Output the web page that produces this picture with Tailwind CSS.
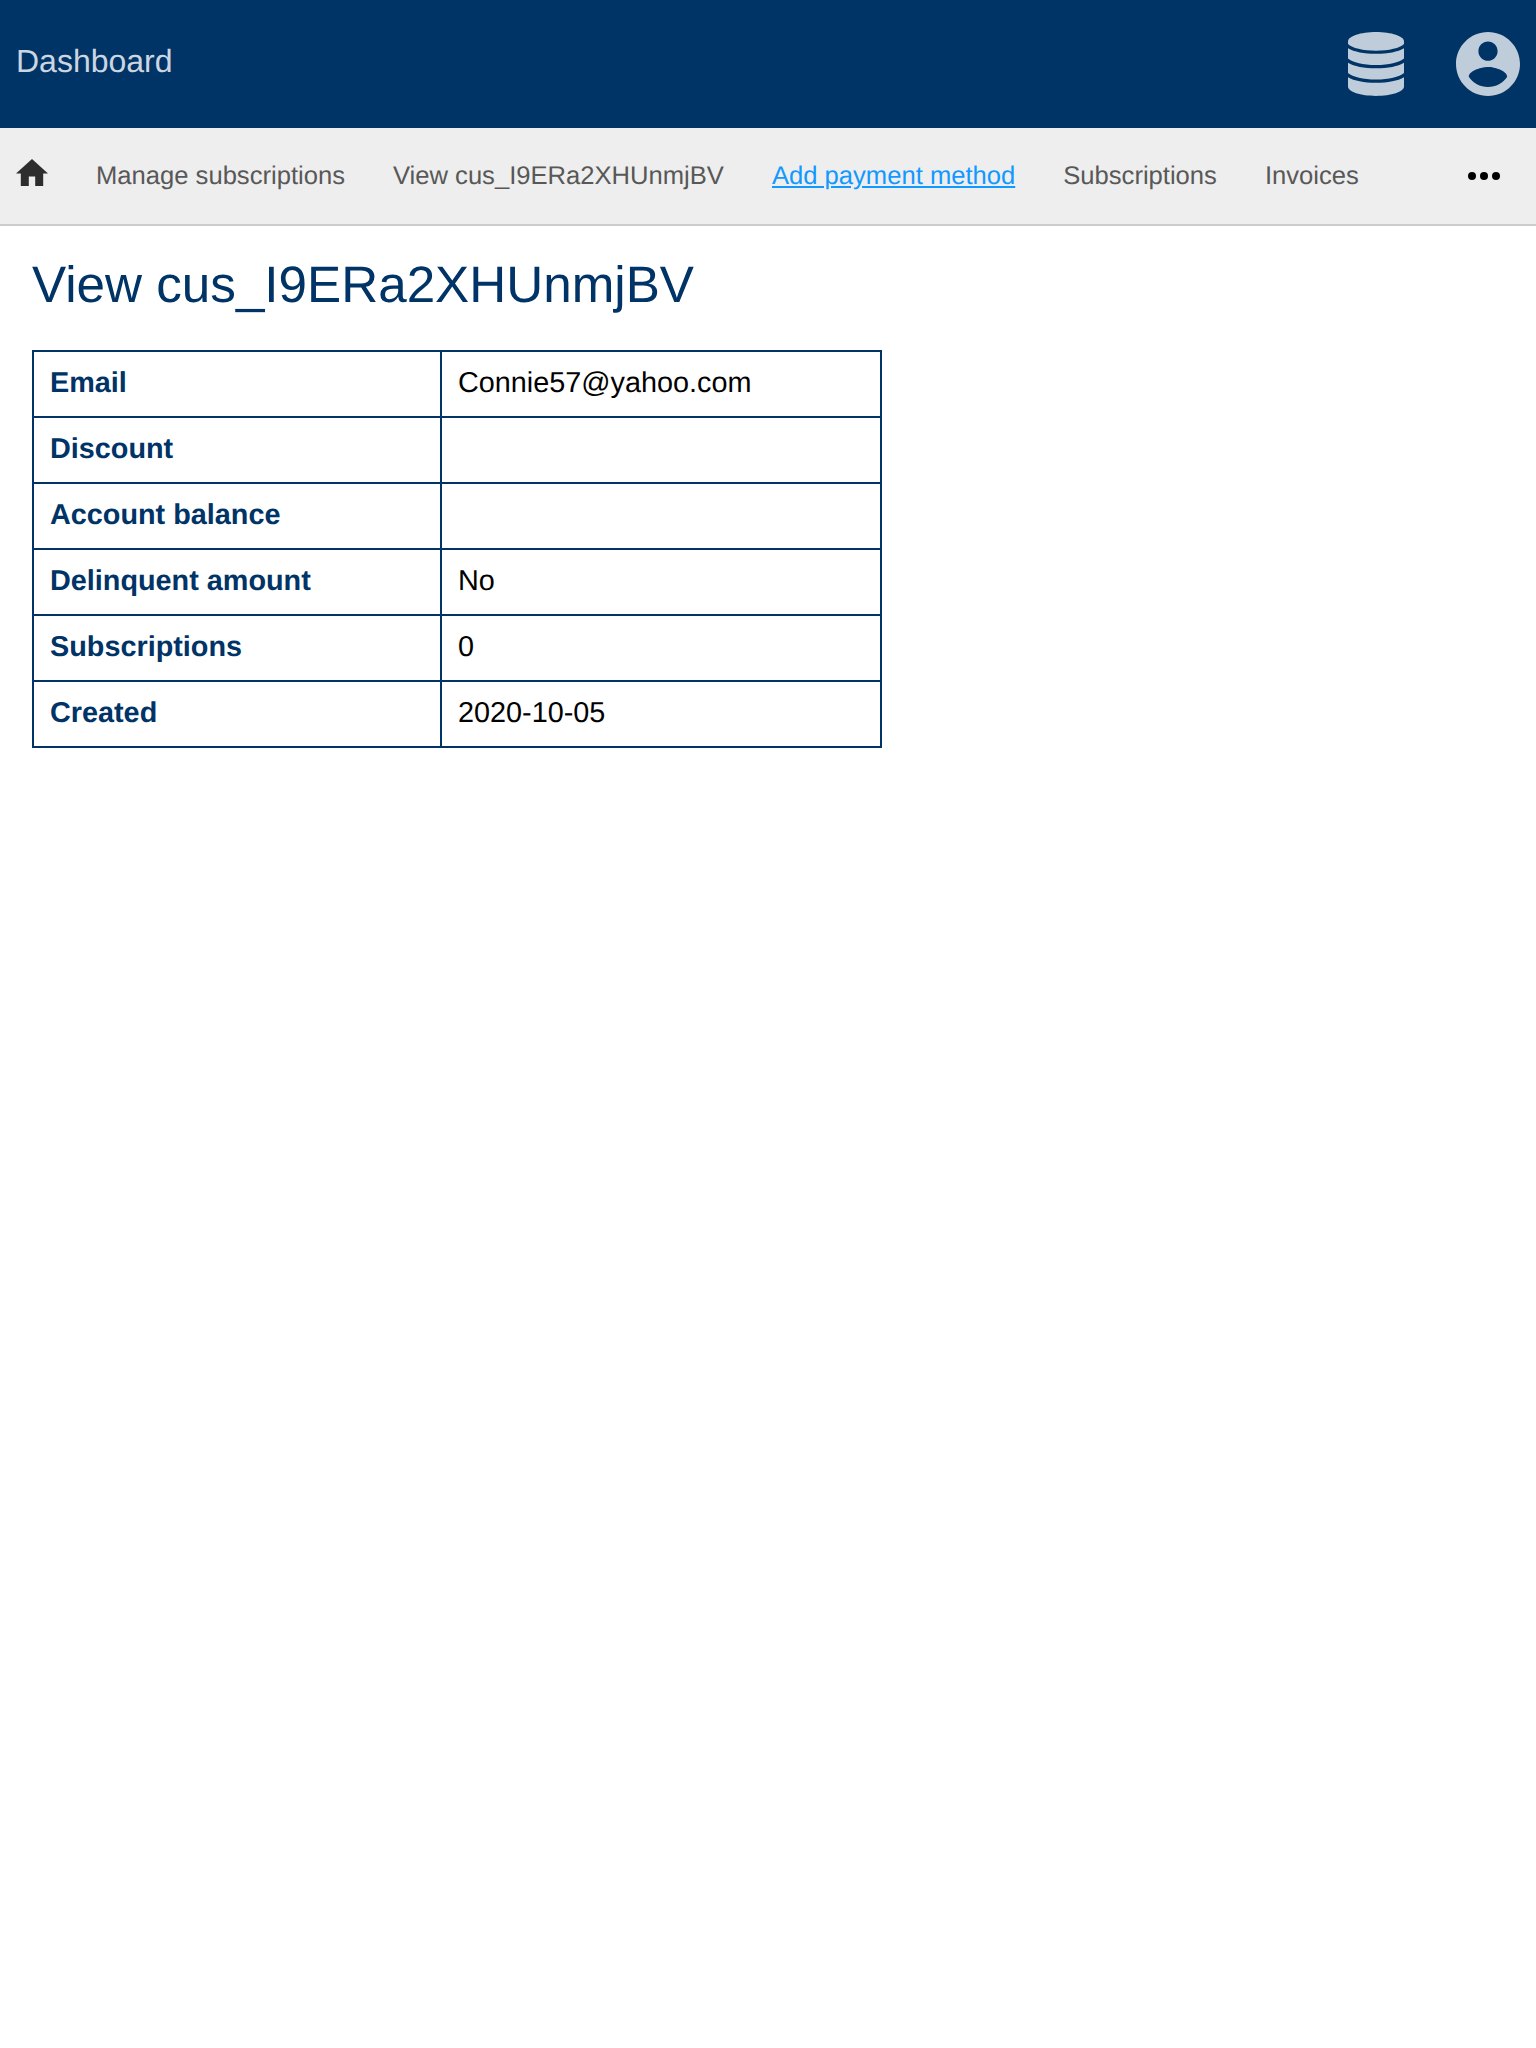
<!DOCTYPE html>
<html lang="en">
<head>
<meta charset="utf-8">
<title>View cus_I9ERa2XHUnmjBV</title>
<script src="https://cdn.jsdelivr.net/npm/@tailwindcss/browser@4"></script>
</head>
<body class="min-h-screen bg-white text-black font-['Liberation_Sans',Arial,sans-serif] [text-rendering:geometricPrecision]">
<header class="flex h-32 items-center justify-between bg-[#003366] px-4">
  <a class="pb-1.5 text-[32px] leading-10 text-[#ccd6e0]">Dashboard</a>
  <div class="flex items-center gap-[52px] text-[#bfccd9]">
    <svg class="h-16 w-14" viewBox="0 0 56 64" fill="currentColor">
      <path d="M28 0C43.500 0 56 4.200 56 9.400V12C52 16 41 18.700 28 18.700S4 16 0 12V9.400C0 4.200 12.500 0 28 0Z"/>
      <path d="M0 16.200C6 19.800 16 21.800 28 21.800S50 19.800 56 16.200V26.500C51 30.400 41 33 28 33S5 30.400 0 26.500Z"/>
      <path d="M0 30.700C6 34.300 16 36.300 28 36.300S50 34.300 56 30.700V41C51 44.900 41 47.500 28 47.500S5 44.900 0 41Z"/>
      <path d="M0 45.200C6 48.800 16 50.700 28 50.700S50 48.800 56 45.200V54.600C56 59.800 43.500 64 28 64S0 59.800 0 54.600Z"/>
    </svg>
    <svg class="size-16" viewBox="2 2 20 20" fill="currentColor">
      <path d="M12 2C6.480 2 2 6.480 2 12s4.480 10 10 10 10-4.480 10-10S17.520 2 12 2zm0 3c1.660 0 3 1.340 3 3s-1.340 3-3 3-3-1.340-3-3 1.340-3 3-3zm0 14.200c-2.500 0-4.710-1.280-6-3.220.03-1.990 4-3.080 6-3.080 1.990 0 5.970 1.090 6 3.080-1.290 1.940-3.500 3.220-6 3.220z"/>
    </svg>
  </div>
</header>
<nav class="flex h-[98px] items-center justify-between border-b-2 border-[#cccccc] bg-[#eeeeee] pl-4 pr-9">
  <div class="flex items-center gap-12 text-[25.6px] leading-8 text-[#585858]">
    <svg class="mb-[7px] h-[27.200px] w-8 text-[#2d2d2d]" viewBox="2 3 20 17" fill="currentColor"><path d="M10 20v-6h4v6h5v-8h3L12 3 2 12h3v8z"/></svg>
    <a>Manage subscriptions</a>
    <a>View cus_I9ERa2XHUnmjBV</a>
    <a class="text-[#1199ff] underline">Add payment method</a>
    <a>Subscriptions</a>
    <a>Invoices</a>
  </div>
  <svg class="h-2 w-8" viewBox="0 0 32 8"><circle cx="4" cy="4" r="4"/><circle cx="16" cy="4" r="4"/><circle cx="28" cy="4" r="4"/></svg>
</nav>
<main class="px-8 pt-[27px]">
  <h1 class="mb-[33px] text-[51.2px] leading-[64px] text-[#003366]">View cus_I9ERa2XHUnmjBV</h1>
  <table class="w-[850px] table-fixed border-collapse text-left text-[28.8px] leading-8 [&_td]:border-2 [&_td]:border-[#003366] [&_td]:px-4 [&_td]:pt-[15px] [&_td]:pb-[17px] [&_th]:border-2 [&_th]:border-[#003366] [&_th]:px-4 [&_th]:pt-[15px] [&_th]:pb-[17px] [&_th]:font-bold [&_th]:text-[#003366]">
    <colgroup><col class="w-[408px]"><col></colgroup>
    <tbody>
      <tr><th>Email</th><td>Connie57@yahoo.com</td></tr>
      <tr><th>Discount</th><td></td></tr>
      <tr><th>Account balance</th><td></td></tr>
      <tr><th>Delinquent amount</th><td>No</td></tr>
      <tr><th>Subscriptions</th><td>0</td></tr>
      <tr><th>Created</th><td>2020-10-05</td></tr>
    </tbody>
  </table>
</main>
</body>
</html>
